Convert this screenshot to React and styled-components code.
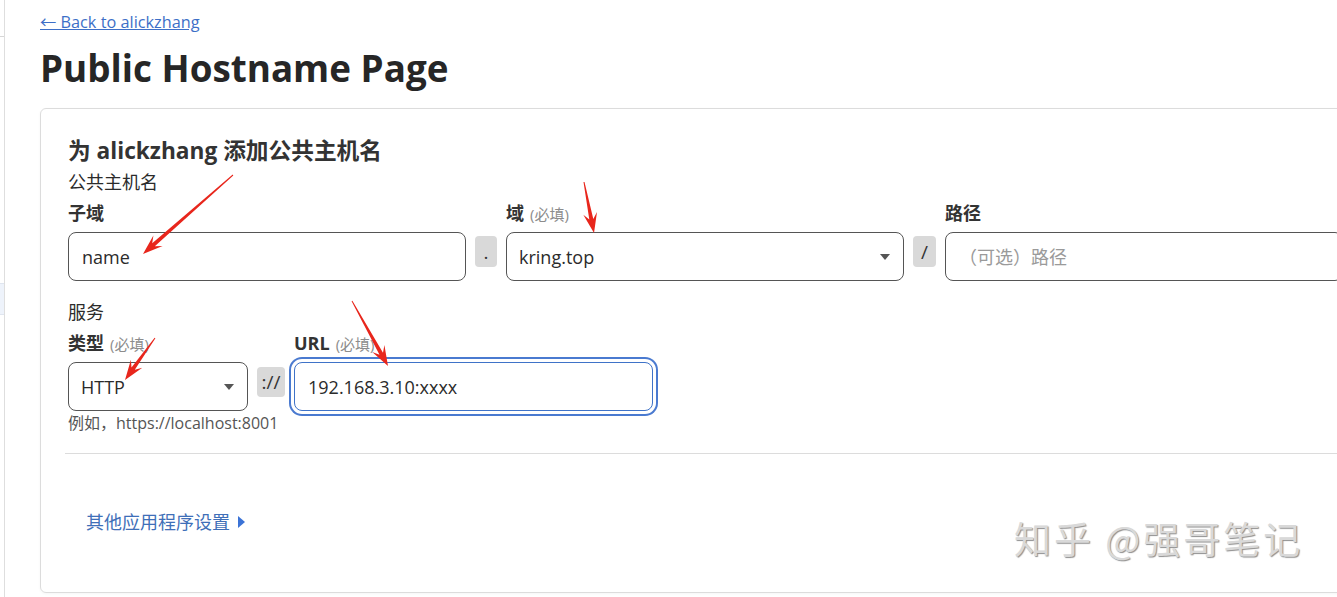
import React from "react";
import styled, { createGlobalStyle } from "styled-components";

const Global = createGlobalStyle`
  html, body { margin: 0; padding: 0; background: #fff; overflow: hidden; }
  body { font-family: "Open Sans", "Noto Sans CJK SC", sans-serif; color: #2b2b2b; }
  * { box-sizing: border-box; }
`;

const Page = styled.div`
  position: relative;
  display: flex;
  width: 1337px;
  height: 597px;
  overflow: hidden;
  background: #fff;
`;

const Sidebar = styled.aside`
  flex: 0 0 5px;
  display: flex;
  flex-direction: column;
  border-right: 1px solid #dedede;
`;

const SideTick = styled.div`
  margin-top: 36px;
  height: 1px;
  background: #d6d6d6;
`;

const SideActive = styled.div`
  margin-top: 246px;
  height: 32px;
  background: #eef3fb;
  border-top: 1px solid #dfe5ef;
  border-bottom: 1px solid #dfe5ef;
`;

const Main = styled.main`
  flex: 1;
  min-width: 0;
  padding: 11px 0 0 35px;
`;

const BackLink = styled.a`
  display: inline-block;
  font-size: 16.3px;
  line-height: 22px;
  color: #3d6fc7;
  text-decoration: underline;
`;

const Title = styled.h1`
  margin: 13px 0 18px;
  font-size: 36.8px;
  line-height: 44px;
  font-weight: 700;
  color: #262626;
`;

const Card = styled.section`
  width: 1340px;
  border: 1px solid #dcdcdc;
  border-radius: 6px;
  padding: 27px 27px 57px;
  box-shadow: 0 1px 3px rgba(0, 0, 0, 0.04);
`;

const CardTitle = styled.h2`
  margin: 0 0 4px;
  font-size: 22.7px;
  line-height: 30px;
  font-weight: 700;
  color: #333;
`;

const SectionTitle = styled.div`
  font-size: 18px;
  line-height: 24px;
  color: #2b2b2b;
  margin-top: ${(p) => p.$top || 0}px;
  margin-bottom: 7px;
`;

const FieldGrid = styled.div`
  display: grid;
  grid-template-columns: ${(p) => p.$cols};
  column-gap: 9px;
  row-gap: 6px;
  align-items: start;
`;

const Label = styled.div`
  font-size: 18px;
  line-height: 24px;
  font-weight: 700;
  color: #333;
  white-space: nowrap;
`;

const Hint = styled.span`
  margin-left: 6px;
  font-size: 15px;
  font-weight: 400;
  color: #8c8c8c;
`;

const Sep = styled.div`
  margin-top: ${(p) => p.$top}px;
  height: ${(p) => p.$h}px;
  border-radius: 4px;
  background: #d9d9d9;
  display: flex;
  align-items: center;
  justify-content: center;
  font-size: 19px;
  color: #333;
`;

const TextInput = styled.input`
  width: 100%;
  height: 49px;
  padding: 0 13px;
  border: 1px solid ${(p) => (p.$focus ? "#3f73c8" : "#555")};
  border-radius: 8px;
  font-family: "Open Sans", "Noto Sans CJK SC", sans-serif;
  font-size: 18px;
  color: #2b2b2b;
  background: #fff;
  outline: none;
  box-shadow: ${(p) => (p.$focus ? "0 0 0 3px #fff, 0 0 0 5px #4a7ad0" : "none")};
  &::placeholder { color: #9a9a9a; }
`;

const SelectBox = styled.div`
  height: 49px;
  padding: 0 13px 0 12px;
  border: 1px solid #555;
  border-radius: 8px;
  display: flex;
  align-items: center;
  justify-content: space-between;
  font-size: 18px;
  color: #2b2b2b;
  &::after {
    content: "";
    border-left: 5px solid transparent;
    border-right: 5px solid transparent;
    border-top: 6px solid #555;
    margin-top: 1px;
  }
`;

const HelpText = styled.div`
  margin-top: 1px;
  font-size: 16px;
  line-height: 22px;
  color: #555;
`;

const Divider = styled.hr`
  margin: 19px 0 0 -3px;
  border: 0;
  border-top: 1px solid #dcdcdc;
`;

const MoreLink = styled.a`
  display: inline-flex;
  align-items: center;
  margin: 55px 0 0 18px;
  font-size: 18px;
  line-height: 26px;
  color: #3f6fb8;
  text-decoration: none;
  &::after {
    content: "";
    margin-left: 8px;
    border-top: 6px solid transparent;
    border-bottom: 6px solid transparent;
    border-left: 7px solid #3b73d6;
  }
`;

const Watermark = styled.div`
  position: absolute;
  left: 1014px;
  top: 513px;
  font-family: "Noto Sans CJK SC", sans-serif;
  font-size: 37px;
  line-height: 50px;
  color: #d9d9d9;
  text-shadow: 1px 1px 1px #8f8f8f;
  letter-spacing: 3px;
  pointer-events: none;
`;

const Overlay = styled.svg`
  position: absolute;
  left: 0;
  top: 0;
  pointer-events: none;
`;

function arrowPoints([x1, y1], [x2, y2]) {
  const dx = x2 - x1;
  const dy = y2 - y1;
  const len = Math.hypot(dx, dy);
  const ux = dx / len;
  const uy = dy / len;
  const nx = -uy;
  const ny = ux;
  const head = 20;
  const bx = x2 - ux * head;
  const by = y2 - uy * head;
  const ix = x2 - ux * (head - 6);
  const iy = y2 - uy * (head - 6);
  const p = (x, y) => `${x.toFixed(1)},${y.toFixed(1)}`;
  return [
    p(x1 + nx * 0.5, y1 + ny * 0.5),
    p(ix + nx * 2, iy + ny * 2),
    p(bx + nx * 7, by + ny * 7),
    p(x2, y2),
    p(bx - nx * 7, by - ny * 7),
    p(ix - nx * 2, iy - ny * 2),
    p(x1 - nx * 0.5, y1 - ny * 0.5),
  ].join(" ");
}

const arrows = [
  [[233, 175], [143, 254]],
  [[584, 182], [594, 233]],
  [[155, 338], [125, 380]],
  [[352, 301], [388, 366]],
];

export default function App() {
  return (
    <>
      <Global />
      <Page>
        <Sidebar>
          <SideTick />
          <SideActive />
        </Sidebar>
        <Main>
          <BackLink href="#">← Back to alickzhang</BackLink>
          <Title>Public Hostname Page</Title>
          <Card>
            <CardTitle>为 alickzhang 添加公共主机名</CardTitle>
            <SectionTitle>公共主机名</SectionTitle>
            <FieldGrid $cols="398px 22px 398px 23px 398px">
              <Label>子域</Label>
              <span />
              <Label>
                域<Hint>(必填)</Hint>
              </Label>
              <span />
              <Label>路径</Label>
              <TextInput readOnly defaultValue="name" />
              <Sep $top={4} $h={31}>.</Sep>
              <SelectBox>kring.top</SelectBox>
              <Sep $top={4} $h={31}>/</Sep>
              <TextInput readOnly placeholder="（可选）路径" />
            </FieldGrid>
            <SectionTitle $top={19}>服务</SectionTitle>
            <FieldGrid $cols="180px 28px 359px">
              <Label>
                类型<Hint>(必填)</Hint>
              </Label>
              <span />
              <Label>
                URL<Hint>(必填)</Hint>
              </Label>
              <SelectBox>HTTP</SelectBox>
              <Sep $top={5} $h={30}>://</Sep>
              <TextInput readOnly $focus defaultValue="192.168.3.10:xxxx" />
            </FieldGrid>
            <HelpText>例如，https://localhost:8001</HelpText>
            <Divider />
            <MoreLink href="#">其他应用程序设置</MoreLink>
          </Card>
        </Main>
        <Watermark>知乎 @强哥笔记</Watermark>
        <Overlay width="1337" height="597" viewBox="0 0 1337 597">
          {arrows.map(([a, b], i) => (
            <polygon key={i} points={arrowPoints(a, b)} fill="#e8261c" />
          ))}
        </Overlay>
      </Page>
    </>
  );
}
